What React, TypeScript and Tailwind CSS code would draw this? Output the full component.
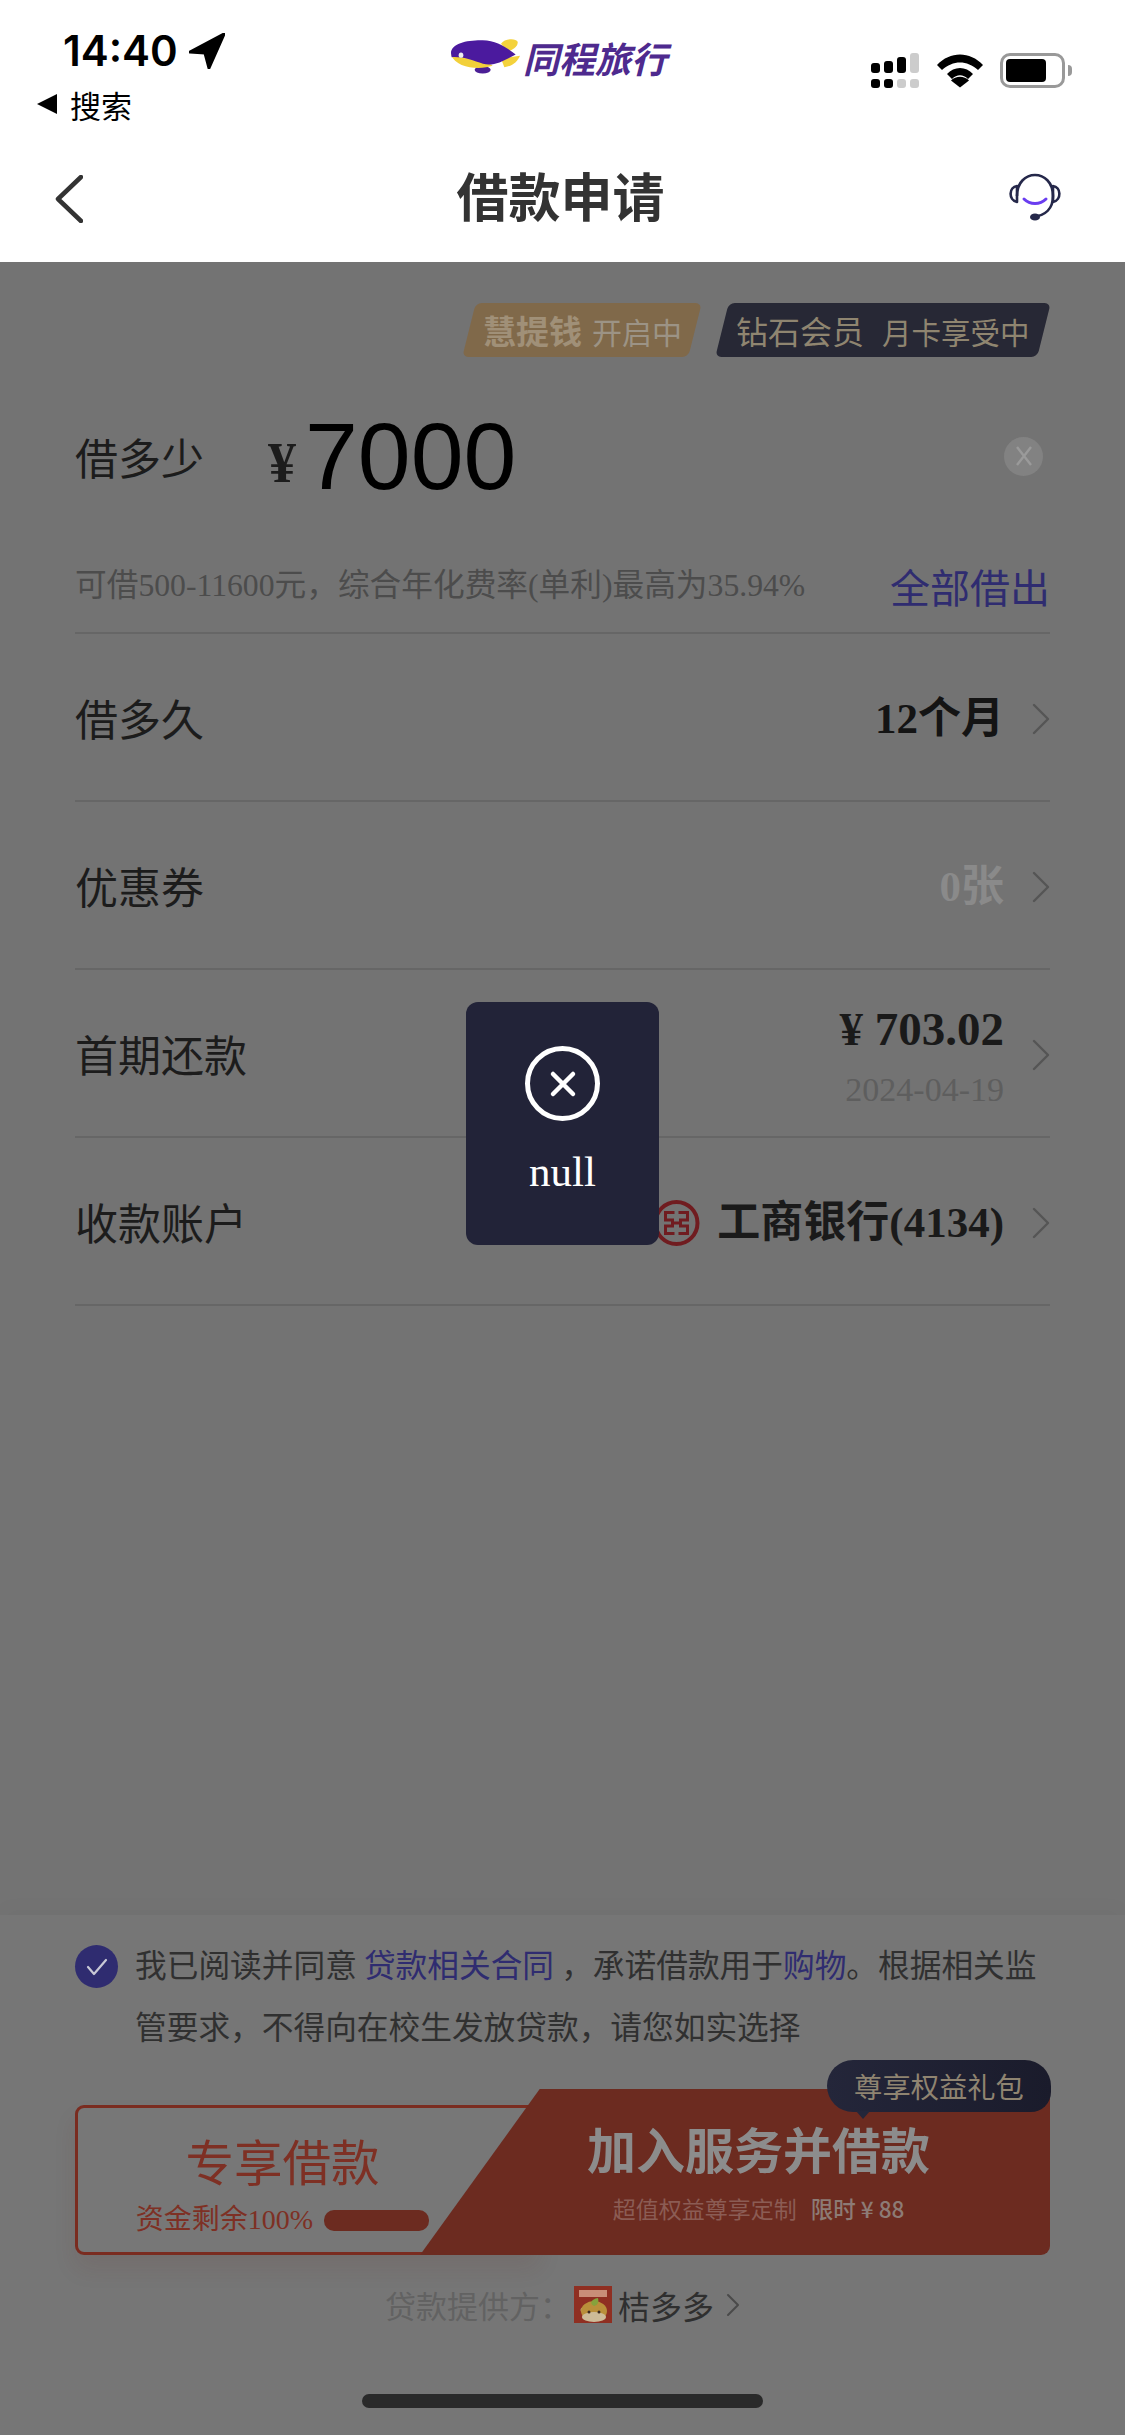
import React from "react";

const serif = "font-['Liberation_Serif','Noto_Sans_CJK_SC',serif]";
const cjk = "font-['Noto_Sans_CJK_SC',sans-serif]";

function Chevron({ className = "" }: { className?: string }) {
  return (
    <svg width="18" height="32" viewBox="0 0 18 32" fill="none" className={className}>
      <path d="M2 2 L16 16 L2 30" stroke="#555555" strokeWidth="2.4" strokeLinecap="round" strokeLinejoin="round" />
    </svg>
  );
}

function Blimp() {
  return (
    <svg width="69" height="35" viewBox="0 0 207 104">
      <path d="M150 14 C160 -2 195 -4 200 8 C202 22 185 32 170 38 Z" fill="#f4d23c" />
      <path d="M150 58 L207 50 C200 66 185 82 160 84 Z" fill="#f4d23c" />
      <ellipse cx="95" cy="92" rx="24" ry="11" fill="#4b1f96" />
      <path d="M0 46 C15 90 90 92 125 80 L60 40 Z" fill="#f2d03a" />
      <path d="M0 42 C0 12 50 2 95 3 C140 4 170 28 194 46 C165 60 130 84 96 74 C66 64 38 52 2 54 Z" fill="#4b1a9e" />
      <ellipse cx="30" cy="48" rx="7" ry="8" fill="#eeeeee" />
    </svg>
  );
}

function Signal() {
  return (
    <div className="flex items-end gap-[4px] w-[49px] h-[35px]">
      {[
        [10, "bg-black", "bg-black"],
        [12, "bg-black", "bg-black"],
        [16, "bg-black", "bg-[#cccccc]"],
        [20, "bg-[#cccccc]", "bg-[#cccccc]"],
      ].map(([h, top, bot], i) => (
        <div key={i} className="flex flex-col gap-[6px] w-[9px]">
          <div className={`w-[9px] rounded-[3px] ${top}`} style={{ height: h as number }} />
          <div className={`w-[9px] h-[9px] rounded-[3px] ${bot}`} />
        </div>
      ))}
    </div>
  );
}

function Wifi() {
  return (
    <svg width="48" height="35" viewBox="0 0 48 35">
      <path d="M1 12 C14 -2 34 -2 47 12 L42 17 C31 7 17 7 6 17 Z" fill="#000" />
      <path d="M11 21 C18 13 30 13 37 21 L32 26 C27 21 21 21 16 26 Z" fill="#000" />
      <path d="M24 35 L15 28 C20 23 28 23 33 28 Z" fill="#000" transform="translate(0 -0.5)" />
    </svg>
  );
}

function Battery() {
  return (
    <div className="flex items-center gap-[3px]">
      <div className="w-[65px] h-[35px] rounded-[10px] border-[3px] border-[#999999] p-[3px]">
        <div className="w-[40px] h-full rounded-[4px] bg-black" />
      </div>
      <div className="w-[4px] h-[11px] rounded-r-[4px] bg-[#999999]" />
    </div>
  );
}

function Headset() {
  return (
    <svg width="54" height="50" viewBox="0 0 54 50" fill="none">
      <path d="M9 24 C9 -4 45 -4 45 24 C45 36 38 44 24 45" stroke="#25284a" strokeWidth="2.6" />
      <path d="M9 14 C1 15 0 28 9 30 Z" stroke="#25284a" strokeWidth="2.6" strokeLinejoin="round" />
      <path d="M45 14 C53 15 54 28 45 30 Z" stroke="#25284a" strokeWidth="2.6" strokeLinejoin="round" />
      <path d="M16 27 C22 33 32 33 38 27" stroke="#6a3df0" strokeWidth="3" strokeLinecap="round" />
      <ellipse cx="27" cy="45" rx="5" ry="3.6" fill="#25284a" />
    </svg>
  );
}

function Icbc() {
  return (
    <svg width="47" height="48" viewBox="0 0 47 48" fill="none" className="shrink-0">
      <circle cx="23.5" cy="24" r="21" stroke="#701c20" strokeWidth="4" />
      <path d="M21.5 13.5 H12.5 V21 H19.5 V27 H12.5 V34.5 H21.5" stroke="#701c20" strokeWidth="3" />
      <path d="M25.5 13.5 H34.5 V21 H27.5 V27 H34.5 V34.5 H25.5" stroke="#701c20" strokeWidth="3" />
      <path d="M19.5 24 H27.5" stroke="#701c20" strokeWidth="3" />
    </svg>
  );
}

function ProviderIcon() {
  return (
    <svg width="38" height="37" viewBox="0 0 38 37" className="shrink-0">
      <rect width="38" height="37" fill="#8f2f22" />
      <rect x="5" y="4" width="28" height="7" fill="#c98e78" />
      <circle cx="9" cy="24" r="2.5" fill="#b9a27a" />
      <ellipse cx="20" cy="25" rx="13" ry="10" fill="#b98f3a" />
      <ellipse cx="20" cy="31" rx="12" ry="5" fill="#cdbb98" />
      <path d="M20 20 C15 18 17 13 24 12 C25 16 24 19 20 20 Z" fill="#86a23c" />
      <circle cx="15" cy="26" r="1.5" fill="#3a2a20" />
      <circle cx="25" cy="26" r="1.5" fill="#3a2a20" />
    </svg>
  );
}

function Row({
  label,
  children,
}: {
  label: string;
  children: React.ReactNode;
}) {
  return (
    <div className="h-[168px] flex items-center justify-between border-b-2 border-[#666666]">
      <span className={`text-[43px] leading-none text-[#1c1c1c] ${cjk}`}>{label}</span>
      <div className="flex items-center gap-[28px] mt-[3px]">
        {children}
        <Chevron />
      </div>
    </div>
  );
}

export default function App() {
  return (
    <div className={`relative w-[1125px] h-[2435px] flex flex-col bg-[#737373] overflow-hidden ${cjk}`}>
      {/* Header */}
      <header className="h-[262px] bg-white shrink-0 flex flex-col">
        <div className="h-[140px] shrink-0 pl-[37px] pr-[53px] pt-[28px] flex justify-between">
          <div className="w-[280px] flex flex-col gap-[14px]">
            <div className="flex items-center gap-[11px] pl-[26px] h-[46px]">
              <span className="font-['Inter',sans-serif] font-semibold text-[42px] leading-none text-black">14:40</span>
              <svg width="36" height="36" viewBox="0 0 36 36">
                <path d="M35 1 L1 19 L16 20 L20 35 Z" fill="#000" stroke="#000" strokeWidth="3" strokeLinejoin="round" />
              </svg>
            </div>
            <div className="flex items-center gap-[13px] h-[32px]">
              <div className="w-0 h-0 border-y-[10px] border-y-transparent border-r-[20px] border-r-black" />
              <span className="text-[31px] leading-none text-black">搜索</span>
            </div>
          </div>
          <div className="flex items-start gap-[3px] pt-[11px] -ml-[70px]">
            <Blimp />
            <span className="text-[36px] leading-[36px] font-bold italic text-[#4e2a8e]">同程旅行</span>
          </div>
          <div className="flex items-start gap-[16px] pt-[25px]">
            <Signal />
            <Wifi />
            <Battery />
          </div>
        </div>
        <div className="flex-1 flex items-start justify-between pl-[55px] pr-[63px] pt-[32px]">
          <svg width="28" height="48" viewBox="0 0 28 48" fill="none" className="mt-[3px]">
            <path d="M26 2 L3 24 L26 46" stroke="#333333" strokeWidth="4.5" strokeLinecap="round" strokeLinejoin="round" />
          </svg>
          <span className="text-[52px] leading-[56px] font-bold text-[#333333] -mt-[5px] ml-[30px]">借款申请</span>
          <Headset />
        </div>
      </header>

      {/* Form */}
      <main className="flex-1 flex flex-col px-[75px]">
        <div className="flex justify-end items-center gap-[27px] mt-[41px] h-[54px] pr-[6px]">
          <div className="h-[54px] w-[226px] -skew-x-[14deg] rounded-[6px] bg-[#80694a] flex items-center justify-center">
            <div className="skew-x-[14deg] flex items-baseline gap-[10px] whitespace-nowrap">
              <span className="text-[33px] leading-none font-bold text-[#a09078]">慧提钱</span>
              <span className="text-[30px] leading-none text-[#9c9385]">开启中</span>
            </div>
          </div>
          <div className="h-[54px] w-[322px] -skew-x-[14deg] rounded-[6px] bg-[#272835] flex items-center justify-center">
            <div className="skew-x-[14deg] flex items-baseline gap-[18px] whitespace-nowrap text-[#8f8570]">
              <span className="text-[32px] leading-none">钻石会员</span>
              <span className="text-[29.5px] leading-none">月卡享受中</span>
            </div>
          </div>
        </div>

        <div className="flex items-center mt-[44px] h-[110px]">
          <span className="text-[43px] leading-none text-[#1c1c1c] w-[193px]">借多少</span>
          <span className={`text-[56px] leading-none font-bold text-[#1c1c1c] mt-[14px] w-[37px] ${serif}`}>¥</span>
          <span className="font-['Liberation_Sans',sans-serif] text-[95px] leading-none text-black">7000</span>
          <div className="ml-auto mr-[7px] w-[39px] h-[39px] rounded-full bg-[#828282] flex items-center justify-center">
            <svg width="24" height="24" viewBox="0 0 24 24" fill="none">
              <path d="M5 3 L19 21 M19 3 L5 21" stroke="#9a9a9a" strokeWidth="2.4" />
            </svg>
          </div>
        </div>

        <div className="flex items-center justify-between h-[109px] mt-[14px] border-b-2 border-[#666666] pt-[15px]">
          <span className={`text-[31.7px] leading-none text-[#4c4c4c] whitespace-nowrap ${serif}`}>
            可借500-11600元，综合年化费率(单利)最高为35.94%
          </span>
          <span className="text-[40px] leading-none text-[#2f2c70]">全部借出</span>
        </div>

        <Row label="借多久">
          <span className={`text-[43px] leading-none font-bold text-[#141414] ${serif}`}>12个月</span>
        </Row>
        <Row label="优惠券">
          <span className={`text-[43px] leading-none font-bold text-[#8a8a8a] ${serif}`}>0张</span>
        </Row>
        <Row label="首期还款">
          <div className={`flex flex-col items-end gap-[20px] mt-[4px] ${serif}`}>
            <span className="text-[47px] leading-none font-bold text-[#1a1a1a] whitespace-pre">¥ 703.02</span>
            <span className="text-[34px] leading-none text-[#5e5e5e]">2024-04-19</span>
          </div>
        </Row>
        <Row label="收款账户">
          <div className="flex items-center gap-[17px]">
            <Icbc />
            <span className={`text-[43px] leading-none font-bold text-[#1a1a1a] ${serif}`}>工商银行(4134)</span>
          </div>
        </Row>
      </main>

      {/* Bottom panel */}
      <section className="h-[520px] shrink-0 bg-[#767676] shadow-[0_-8px_20px_rgba(0,0,0,0.02)] px-[75px] pt-[30px] flex flex-col">
        <div className="flex gap-[17px]">
          <div className="w-[43px] h-[43px] rounded-full bg-[#2f2c70] flex items-center justify-center shrink-0">
            <svg width="26" height="22" viewBox="0 0 26 22" fill="none">
              <path d="M4 11 L10 18 L22 4" stroke="#c8c8d6" strokeWidth="2.2" strokeLinecap="round" strokeLinejoin="round" />
            </svg>
          </div>
          <p className="text-[31.7px] leading-[62px] -mt-[13px] text-[#303030] w-[915px]">
            我已阅读并同意 <span className="text-[#2f2c70]">贷款相关合同</span> ，承诺借款用于<span className="text-[#2f2c70]">购物</span>。根据相关监管要求，不得向在校生发放贷款，请您如实选择
          </p>
        </div>

        <div className="relative flex items-end h-[166px] mt-[33px]">
          <div className="h-[150px] w-[465px] shrink-0 -mr-[117px] rounded-[9px] border-[3px] border-[#7a2c20] bg-[#777777] shadow-[0_14px_22px_rgba(100,40,30,0.10)]">
            <div className="w-[409px] flex flex-col items-center pt-[24px]">
              <span className="text-[48.5px] leading-[56px] text-[#7e3024]">专享借款</span>
              <div className="flex items-center gap-[11px] mt-[18px]">
                <span className={`text-[28px] leading-none text-[#7e3024] whitespace-nowrap ${serif}`}>资金剩余100%</span>
                <div className="w-[105px] h-[21px] rounded-[10px] bg-[#6c2b20]" />
              </div>
            </div>
          </div>
          <div className="relative h-[166px] flex-1 -ml-[3px] rounded-br-[9px] rounded-tr-[9px] bg-[#6c2b20] [clip-path:polygon(19%_0,100%_0,100%_100%,0_100%)] pl-[47px] flex flex-col items-center pt-[33px]">
            <span className="text-[49px] leading-[52px] font-bold text-[#8c8c8c] whitespace-nowrap">加入服务并借款</span>
            <div className="flex items-center gap-[14px] mt-[23px] whitespace-nowrap">
              <span className="text-[23px] leading-none text-[#8b5c54]">超值权益尊享定制</span>
              <span className="text-[22.5px] leading-none font-medium text-[#8d7b75]">限时 ¥ 88</span>
            </div>
          </div>

          <div className="absolute -top-[29px] right-[-1px] w-[224px] h-[52px] rounded-t-[26px] rounded-bl-[26px] rounded-br-[20px] bg-gradient-to-r from-[#24263a] to-[#1a1b2b] flex items-center justify-center">
            <span className="text-[28.3px] leading-none text-[#8f8471] whitespace-nowrap pt-[1px]">尊享权益礼包</span>
            <div className="absolute left-[29px] top-[51px] w-0 h-0 border-x-[7px] border-x-transparent border-t-[8px] border-t-[#24263a]" />
          </div>
        </div>

        <div className="flex items-center justify-center mt-[31px] h-[37px]">
          <span className="text-[31px] leading-none text-[#626262]">贷款提供方：</span>
          <span className="w-[3px]" />
          <ProviderIcon />
          <span className="text-[32px] leading-none text-[#2f2f2f] ml-[6px]">桔多多</span>
          <svg width="14" height="24" viewBox="0 0 14 24" fill="none" className="ml-[12px]">
            <path d="M2 2 L12 12 L2 22" stroke="#4a4a4a" strokeWidth="2" strokeLinecap="round" strokeLinejoin="round" />
          </svg>
        </div>

        <div className="mt-[71px] mx-auto w-[401px] h-[14px] rounded-full bg-[#2a2a2a]" />
      </section>

      {/* Toast */}
      <div className="absolute left-[466px] top-[1002px] w-[193px] h-[243px] rounded-[12px] bg-[#222338] flex flex-col items-center pt-[44px]">
        <div className="w-[75px] h-[75px] rounded-full border-[5px] border-white flex items-center justify-center">
          <svg width="30" height="30" viewBox="0 0 30 30" fill="none">
            <path d="M5 5 L25 25 M25 5 L5 25" stroke="#ffffff" strokeWidth="4.5" strokeLinecap="round" />
          </svg>
        </div>
        <span className="font-['Liberation_Serif',serif] text-[43px] leading-[50px] text-white mt-[26px]">null</span>
      </div>
    </div>
  );
}
